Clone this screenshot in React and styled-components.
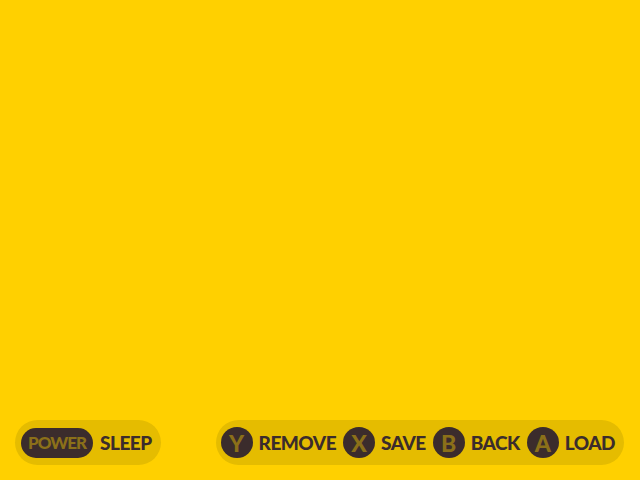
import React from "react";
import styled, { createGlobalStyle } from "styled-components";

const GlobalStyle = createGlobalStyle`
  html, body {
    margin: 0;
    padding: 0;
    background-color: #ffd000;
  }
  #root {
    height: 100vh;
  }
`;

function App() {
  return (
    <>
      <GlobalStyle />
      <Screen>
        <Footer>
          <Pill $start={6}>
            <Tag>POWER</Tag>
            <Label>SLEEP</Label>
          </Pill>
          <Pill $start={5}>
            <Hint>
              <Key>Y</Key>
              <Label>REMOVE</Label>
            </Hint>
            <Hint>
              <Key>X</Key>
              <Label>SAVE</Label>
            </Hint>
            <Hint>
              <Key>B</Key>
              <Label>BACK</Label>
            </Hint>
            <Hint>
              <Key>A</Key>
              <Label>LOAD</Label>
            </Hint>
          </Pill>
        </Footer>
      </Screen>
    </>
  );
}

const Screen = styled.div`
  height: 100%;
  display: flex;
  flex-direction: column;
  justify-content: flex-end;
  font-family: Lato, "Open Sans", sans-serif;
`;

const Footer = styled.div`
  display: flex;
  justify-content: space-between;
  align-items: center;
  padding: 0 16px 15px 15px;
`;

const Pill = styled.div`
  display: flex;
  align-items: center;
  gap: 7px;
  height: 45px;
  padding: 0 9px 0 ${(p) => p.$start}px;
  border-radius: 23px;
  background-color: #e5bc00;
`;

const Hint = styled.div`
  display: flex;
  align-items: center;
  gap: 6px;
`;

const Tag = styled.div`
  display: flex;
  align-items: center;
  justify-content: center;
  height: 30px;
  width: 72px;
  border-radius: 15px;
  background-color: #3b2c2c;
  color: #8b7019;
  font-size: 17px;
  font-weight: 900;
  letter-spacing: -1px;
`;

const Key = styled.div`
  display: flex;
  align-items: center;
  justify-content: center;
  width: 32px;
  height: 31px;
  border-radius: 50%;
  background-color: #3b2c2c;
  color: #8b7019;
  font-size: 23px;
  font-weight: 900;
`;

const Label = styled.div`
  color: #3b2c2c;
  font-size: 19px;
  font-weight: 900;
  letter-spacing: -0.5px;
`;

export default App;
